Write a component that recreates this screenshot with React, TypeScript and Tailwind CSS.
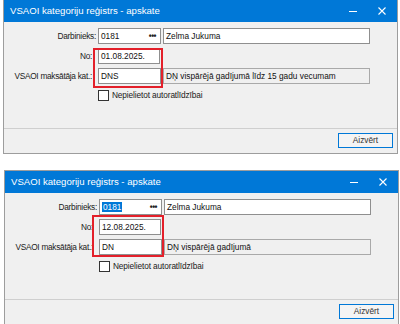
import React from 'react'

type DialogProps = {
  date: string
  code: string
  desc: string
  selected?: boolean
  mark: string
  className?: string
}

function Field({ className, children }: { className: string; children?: React.ReactNode }) {
  return (
    <div className={`h-[16px] flex items-center border border-[#8f8f8f] pl-[2px] text-[8.3px] text-[#111] ${className}`}>
      {children}
    </div>
  )
}

function Row({ label, narrow, children }: { label: string; narrow?: boolean; children: React.ReactNode }) {
  return (
    <div className="flex items-center">
      <div className={`${narrow ? 'w-[88px]' : 'w-[92px]'} text-right text-[8.3px] tracking-[-0.28px] text-[#1a1a1a] whitespace-nowrap`}>{label}</div>
      <div className={`flex gap-[2px] ${narrow ? 'ml-[6px]' : 'ml-[2px]'}`}>{children}</div>
    </div>
  )
}

function Dialog({ date, code, desc, selected, mark, className }: DialogProps) {
  return (
    <div className={`relative w-[395px] h-[155px] shrink-0 flex flex-col border border-[#9d9d9d] bg-[#f0f0f0] ${className}`}>
      {/* Title bar */}
      <div className="h-[22px] bg-[#0078d7] flex items-center pl-[6px] text-white">
        <span className="flex-1 text-[9.6px]">VSAOI kategoriju reģistrs - apskate</span>
        <div className="w-[28px] flex justify-center">
          <div className="w-[8px] h-px bg-white" />
        </div>
        <div className="w-[30px] flex justify-center">
          <svg width="8" height="8" viewBox="0 0 8 8">
            <path d="M0.5 0.5 L7.5 7.5 M7.5 0.5 L0.5 7.5" stroke="white" strokeWidth="1.1" />
          </svg>
        </div>
      </div>

      {/* Form */}
      <div className="flex-1 flex flex-col pt-[6px]">
        <div className="flex flex-col gap-[4px]">
          <Row label="Darbinieks:">
            <Field className="w-[63px] bg-white justify-between pr-[4px]">
              {selected ? (
                <span className="bg-[#0078d7] text-white px-[1px] leading-[10px]">0181</span>
              ) : (
                <span>0181</span>
              )}
              <span className="font-bold tracking-[-0.5px] text-[#222]">•••</span>
            </Field>
            <Field className="w-[207px] bg-white">Zelma Jukuma</Field>
          </Row>
          <Row label="No:" narrow>
            <Field className="w-[62px] bg-white">{date}</Field>
          </Row>
          <Row label="VSAOI maksātāja kat.:" narrow>
            <Field className="w-[63px] bg-white">{code}</Field>
            <Field className="w-[207px] bg-[#f0f0f0] border-[#a9a9a9]">{desc}</Field>
          </Row>
        </div>
        <div className="flex items-center ml-[94px] mt-[5px] gap-[3px]">
          <div className="w-[11px] h-[11px] border border-[#333] bg-white" />
          <span className="text-[8.3px] tracking-[-0.12px] text-[#1a1a1a]">Nepielietot autoratlīdzībai</span>
        </div>
      </div>

      {/* Footer */}
      <div className="h-[25px] border-t border-[#cfcfcf] flex justify-end pt-[4px] pr-[4px]">
        <div className="w-[55px] h-[15px] border border-[#0078d7] bg-[#f4f4f4] flex items-center justify-center text-[8.3px] text-[#333]">
          Aizvērt
        </div>
      </div>

      {/* Red annotation */}
      <div className={`absolute border-2 border-[#e3202a] ${mark}`} />
    </div>
  )
}

export default function App() {
  return (
    <div className="w-[400px] h-[324px] overflow-hidden bg-white flex flex-col font-['Liberation_Sans',Arial,sans-serif]">
      <Dialog
        className="ml-[3px] mt-[-1px]"
        date="01.08.2025."
        code="DNS"
        desc="DŅ vispārējā gadījumā līdz 15 gadu vecumam"
        mark="left-[89px] top-[48px] w-[70px] h-[40px]"
      />
      <Dialog
        className="ml-[4px] mt-[16px]"
        date="12.08.2025."
        code="DN"
        desc="DŅ vispārējā gadījumā"
        selected
        mark="left-[87px] top-[44px] w-[72px] h-[42px]"
      />
    </div>
  )
}
